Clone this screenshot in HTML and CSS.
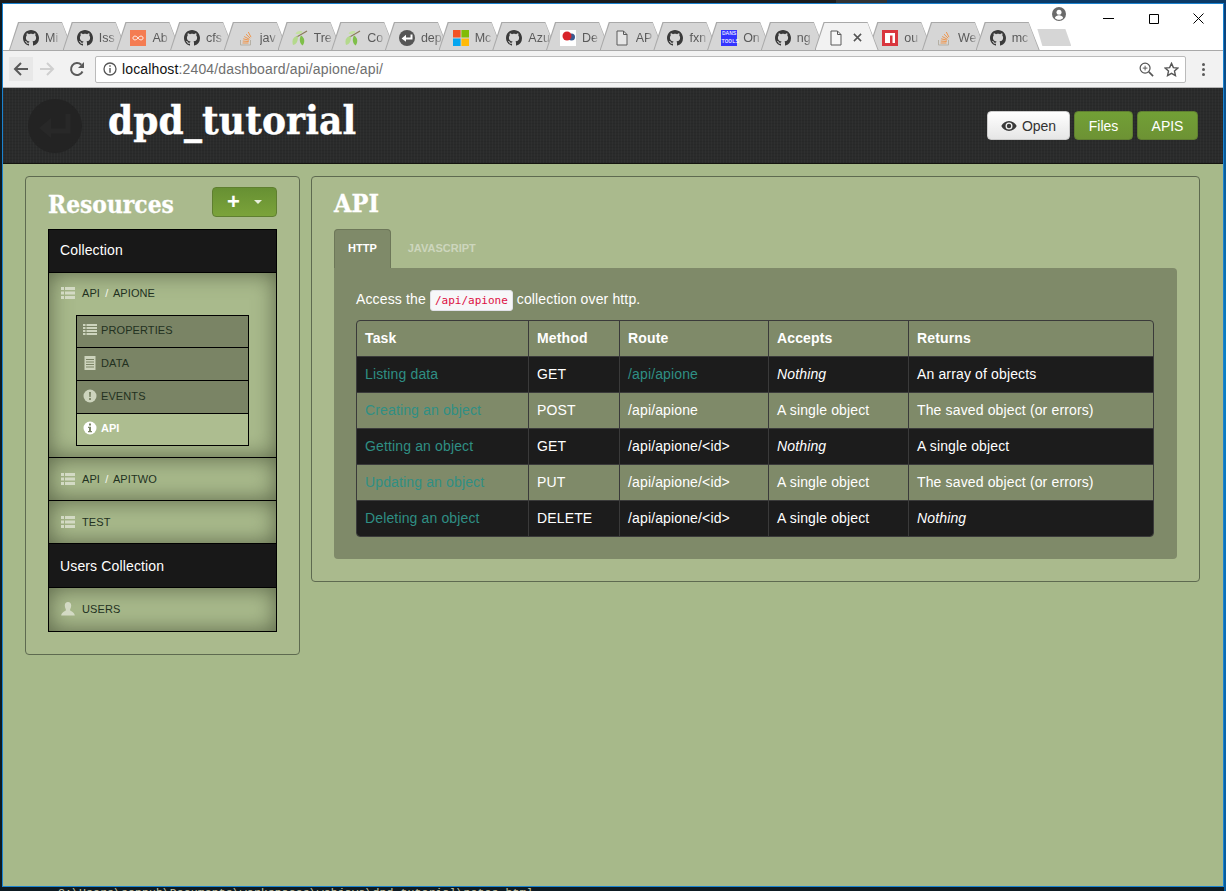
FILE: index.html
```html
<!DOCTYPE html>
<html lang="en">
<head>
  <meta charset="UTF-8" />
  <title>dpd_tutorial</title>
  <link rel="stylesheet" href="styles.css">
</head>
<body>
  <svg class="sprite" xmlns="http://www.w3.org/2000/svg">
    <symbol id="i-gh" viewBox="0 0 16 16"><path fill="#3a3a3a" d="M8 0C3.58 0 0 3.58 0 8c0 3.54 2.29 6.53 5.47 7.59.4.07.55-.17.55-.38 0-.19-.01-.82-.01-1.49-2.01.37-2.53-.49-2.69-.94-.09-.23-.48-.94-.82-1.13-.28-.15-.68-.52-.01-.53.63-.01 1.08.58 1.23.82.72 1.21 1.87.87 2.33.66.07-.52.28-.87.51-1.07-1.78-.2-3.64-.89-3.64-3.95 0-.87.31-1.59.82-2.15-.08-.2-.36-1.02.08-2.12 0 0 .67-.21 2.2.82.64-.18 1.32-.27 2-.27.68 0 1.36.09 2 .27 1.53-1.04 2.2-.82 2.2-.82.44 1.1.16 1.92.08 2.12.51.56.82 1.27.82 2.15 0 3.07-1.87 3.75-3.65 3.95.29.25.54.73.54 1.48 0 1.07-.01 1.93-.01 2.2 0 .21.15.46.55.38A8.013 8.013 0 0016 8c0-4.42-3.58-8-8-8z"/></symbol>
    <symbol id="i-so" viewBox="0 0 16 16"><path fill="none" stroke="#b5b0a5" stroke-width="1" d="M2.500 10v5h10v-5"/><path fill="none" stroke="#f0954a" stroke-width="1" d="M4.500 13h6M4.700 11l6 .5M5.200 8.800l5.800 1.400M6.200 6.500l5.200 2.800M8 4.200l4.200 4M10.300 2l2.700 5.200"/></symbol>
    <symbol id="i-tree" viewBox="0 0 16 16"><path fill="none" stroke="#8a7a5a" stroke-width="1.200" d="M3 8 15 1"/><path fill="#b4d98c" d="M1 15C-.5 10 1 7 5.500 6 6.500 10 5 14 1 15z"/><path fill="#7fbf4a" d="M10.500 15.500C7.500 13 7 9 9 5.500c3.500 2 4.500 6.500 1.500 10z"/><path fill="#c4e2a0" d="M3.500 3.500C5.500 1 8 .5 10.500 1.500 9.500 4 6 5 3.500 3.500z"/></symbol>
    <symbol id="i-dpd" viewBox="0 0 16 16"><circle cx="8" cy="8" r="8" fill="#555"/><path fill="none" stroke="#fff" stroke-width="2" d="M12.500 4.500v4h-8"/><path fill="#fff" d="M7 4.800v7L2.600 8.400z"/></symbol>
    <symbol id="i-ms" viewBox="0 0 16 16"><path fill="#f35325" d="M0 0h7.600v7.600H0z"/><path fill="#81bc06" d="M8.400 0H16v7.600H8.400z"/><path fill="#05a6f0" d="M0 8.400h7.600V16H0z"/><path fill="#ffba08" d="M8.400 8.400H16V16H8.400z"/></symbol>
    <symbol id="i-doc" viewBox="0 0 16 16"><path fill="#fff" fill-opacity=".4" stroke="#5a5a5a" stroke-width="1" d="M3 1h6.500L13 4.500V15H3z"/><path fill="none" stroke="#5a5a5a" stroke-width="1" d="M9.500 1v3.500H13"/></symbol>
    <symbol id="i-list" viewBox="0 0 14 14"><path fill="#d3dac4" d="M0 1h3v3H0zM4 1h10v3H4zM0 5.500h3v3H0zM4 5.500h10v3H4zM0 10h3v3H0zM4 10h10v3H4z"/></symbol>
    <symbol id="i-lines" viewBox="0 0 14 14"><path fill="#cdd4bd" d="M0 1h2.500v2H0zM3.500 1H14v2H3.500zM0 4h2.500v2H0zM3.500 4H14v2H3.500zM0 7h2.500v2H0zM3.500 7H14v2H3.500zM0 10h2.500v2H0zM3.500 10H14v2H3.500z"/></symbol>
  </svg>

  <div class="desktop-top"></div>

  <div class="window">
    <div class="titlebar">
      <div class="tabs">
        <div class="tab"><svg class="fav"><use href="#i-gh"/></svg><span class="tab-name">Mi</span></div>
        <div class="tab"><svg class="fav"><use href="#i-gh"/></svg><span class="tab-name">Iss</span></div>
        <div class="tab">
          <svg class="fav" viewBox="0 0 16 16"><path fill="#f47c52" d="M0 0h16v16H0z"/><path fill="none" stroke="#fff" stroke-width=".9" d="M8 8C6.500 5.500 3 5.500 3 8s3.500 2.500 5 0 5-2.500 5 0-3.500 2.500-5 0z"/></svg>
          <span class="tab-name">Ab</span>
        </div>
        <div class="tab"><svg class="fav"><use href="#i-gh"/></svg><span class="tab-name">cfs</span></div>
        <div class="tab"><svg class="fav"><use href="#i-so"/></svg><span class="tab-name">jav</span></div>
        <div class="tab"><svg class="fav"><use href="#i-tree"/></svg><span class="tab-name">Tre</span></div>
        <div class="tab"><svg class="fav"><use href="#i-tree"/></svg><span class="tab-name">Co</span></div>
        <div class="tab"><svg class="fav"><use href="#i-dpd"/></svg><span class="tab-name">dep</span></div>
        <div class="tab"><svg class="fav"><use href="#i-ms"/></svg><span class="tab-name">Mc</span></div>
        <div class="tab"><svg class="fav"><use href="#i-gh"/></svg><span class="tab-name">Azu</span></div>
        <div class="tab">
          <svg class="fav" viewBox="0 0 16 16"><path fill="#fff" d="M0 0h16v16H0z"/><circle cx="11.500" cy="7" r="3.500" fill="#3b5a90"/><circle cx="7" cy="6" r="4.500" fill="#d8232a"/></svg>
          <span class="tab-name">De</span>
        </div>
        <div class="tab"><svg class="fav"><use href="#i-doc"/></svg><span class="tab-name">AP</span></div>
        <div class="tab"><svg class="fav"><use href="#i-gh"/></svg><span class="tab-name">fxn</span></div>
        <div class="tab"><span class="fav dans">DANS TOOLS</span><span class="tab-name">On</span></div>
        <div class="tab"><svg class="fav"><use href="#i-gh"/></svg><span class="tab-name">ng</span></div>
        <div class="tab tab-active">
          <svg class="fav"><use href="#i-doc"/></svg>
          <svg class="tab-x" viewBox="0 0 10 10"><path fill="none" stroke="#555" stroke-width="1.700" d="M1 1l8 8M9 1l-8 8"/></svg>
        </div>
        <div class="tab">
          <svg class="fav" viewBox="0 0 16 16"><path fill="#d9363e" d="M0 0h16v16H0z"/><path fill="#fff" d="M3 3h10v10h-2.500V5.500H8V13H3z"/></svg>
          <span class="tab-name">ou</span>
        </div>
        <div class="tab"><svg class="fav"><use href="#i-so"/></svg><span class="tab-name">We</span></div>
        <div class="tab"><svg class="fav"><use href="#i-gh"/></svg><span class="tab-name">mc</span></div>
        <div class="new-tab"></div>
      </div>
      <div class="win-area">
        <svg class="profile" viewBox="0 0 14 14"><circle cx="7" cy="7" r="7" fill="#6a6a6a"/><circle cx="7" cy="5.200" r="2.500" fill="#fff"/><path fill="#fff" d="M2.800 11c.6-2 2.400-2.800 4.200-2.800s3.600.8 4.200 2.800c-1 1.200-2.500 1.800-4.200 1.800S3.800 12.200 2.800 11z"/></svg>
        <div class="win-btn"><svg viewBox="0 0 11 11"><path stroke="#000" d="M0 5.500h11"/></svg></div>
        <div class="win-btn"><svg viewBox="0 0 11 11"><path fill="none" stroke="#000" d="M1.500 1.500h9v9h-9z"/></svg></div>
        <div class="win-btn"><svg viewBox="0 0 11 11"><path stroke="#000" d="M.5.500l10 10M10.500.500l-10 10"/></svg></div>
      </div>
    </div>

    <div class="toolbar">
      <div class="nav-btn nav-hover"><svg viewBox="0 0 16 16"><path fill="none" stroke="#5a5a5a" stroke-width="2" d="M15 8H2M8 2L2 8l6 6"/></svg></div>
      <div class="nav-btn nav-fwd"><svg viewBox="0 0 16 16"><path fill="none" stroke="#cfcfcf" stroke-width="2" d="M1 8h13M8 2l6 6-6 6"/></svg></div>
      <div class="nav-btn nav-reload"><svg viewBox="0 0 16 16"><path fill="none" stroke="#5a5a5a" stroke-width="2" d="M13.500 10.500A6 6 0 1 1 12.300 3.800"/><path fill="#5a5a5a" d="M15 1v6H9z"/></svg></div>
      <div class="address">
        <svg class="addr-info" viewBox="0 0 14 14"><circle cx="7" cy="7" r="6" fill="none" stroke="#555" stroke-width="1.300"/><path fill="#555" d="M6.300 3.300h1.400v1.400H6.300zM6.300 6h1.400v4.800H6.300z"/></svg>
        <span class="addr-host">localhost</span><span class="addr-path">:2404/dashboard/api/apione/api/</span>
        <svg class="addr-zoom" viewBox="0 0 16 16"><circle cx="6.500" cy="6.500" r="5.300" fill="none" stroke="#555" stroke-width="1.300"/><path stroke="#555" stroke-width="1.800" d="M10.500 10.500L15 15"/><path stroke="#555" d="M6.500 4v5M4 6.500h5"/></svg>
        <svg class="addr-star" viewBox="0 0 16 16"><path fill="none" stroke="#555" stroke-width="1.500" d="M8 1.500l2 4.500 4.800.5-3.600 3.200 1 4.800L8 12.100l-4.200 2.400 1-4.800L1.200 6.500 6 6z"/></svg>
      </div>
      <div class="chrome-menu"><span></span><span></span><span></span></div>
    </div>

    <header class="app-header">
      <svg class="app-logo" viewBox="0 0 54 54"><circle cx="27" cy="27" r="27" fill="#232323"/><path fill="none" stroke="#282828" stroke-width="5" d="M40 15v17H18"/><path fill="#282828" d="M23 19v20l-12-10z"/></svg>
      <h1 class="app-title">dpd_tutorial</h1>
      <div class="app-actions">
        <a class="btn btn-white"><svg class="eye" viewBox="0 0 16 12"><path fill="#3a3a3a" d="M8 1C4.500 1 1.700 3.200 .3 6c1.400 2.800 4.200 5 7.700 5s6.300-2.200 7.700-5C14.300 3.200 11.500 1 8 1zm0 8.500A3.500 3.500 0 1 1 8 2.500a3.500 3.500 0 0 1 0 7z"/><circle cx="8" cy="6" r="2.200" fill="#3a3a3a"/></svg>Open</a>
        <a class="btn btn-green btn-files">Files</a>
        <a class="btn btn-green btn-apis">APIS</a>
      </div>
    </header>

    <div class="content">
      <aside class="panel sidebar">
        <div class="sidebar-head">
          <h2 class="slab side-title">Resources</h2>
          <a class="btn-add"><span class="plus">+</span><span class="caret"></span></a>
        </div>
        <div class="res-list">
          <div class="res-group">Collection</div>
          <div class="res-item res-open">
            <div class="res-label"><svg class="res-ico"><use href="#i-list"/></svg><span>API <b class="slash">/</b> APIONE</span></div>
            <ul class="sub-list">
              <li class="sub-item"><svg class="sub-ico"><use href="#i-lines"/></svg>Properties</li>
              <li class="sub-item">
                <svg class="sub-ico" viewBox="0 0 14 14"><path fill="#cdd4bd" d="M1.500 0h11v14h-11z"/><path stroke="#7a8465" d="M3 3.500h8M3 6h8M3 8.500h8M3 11h8"/></svg>
                Data
              </li>
              <li class="sub-item">
                <svg class="sub-ico" viewBox="0 0 14 14"><circle cx="7" cy="7" r="6.500" fill="#cdd4bd"/><path fill="#7a8465" d="M6 3h2l-.3 5H6.300zM6.100 9h1.800v2H6.100z"/></svg>
                Events
              </li>
              <li class="sub-item sub-active">
                <svg class="sub-ico" viewBox="0 0 14 14"><circle cx="7" cy="7" r="6.500" fill="#fff"/><path fill="#7a8465" d="M6 2.500h2v2H6zM5 5.800h3V10h1v1.300H5V10h1V7H5z"/></svg>
                API
              </li>
            </ul>
          </div>
          <div class="res-item"><div class="res-label"><svg class="res-ico"><use href="#i-list"/></svg><span>API <b class="slash">/</b> APITWO</span></div></div>
          <div class="res-item"><div class="res-label"><svg class="res-ico"><use href="#i-list"/></svg><span>Test</span></div></div>
          <div class="res-group res-group-users">Users Collection</div>
          <div class="res-item res-last">
            <div class="res-label">
              <svg class="res-ico" viewBox="0 0 14 14"><path fill="#d3dac4" d="M7 0c2 0 3.200 1.400 3.200 3.500S9 7.500 9 8c0 1 4.500 2 4.800 5.500H.2C.5 10 5 9 5 8c0-.5-1.200-2.400-1.200-4.500S5 0 7 0z"/></svg>
              <span>Users</span>
            </div>
          </div>
        </div>
      </aside>

      <main class="panel main-panel">
        <h2 class="slab main-title">API</h2>
        <div class="doc-tabs">
          <a class="doc-tab doc-tab-on">HTTP</a>
          <a class="doc-tab">JavaScript</a>
        </div>
        <div class="doc-pane">
          <p class="doc-intro">Access the <code>/api/apione</code> collection over http.</p>
          <div class="table-wrap">
            <table class="api-table">
              <colgroup>
                <col class="c-task"><col class="c-method"><col class="c-route"><col class="c-accepts"><col>
              </colgroup>
              <thead>
                <tr><th>Task</th><th>Method</th><th>Route</th><th>Accepts</th><th>Returns</th></tr>
              </thead>
              <tbody>
                <tr><td><a>Listing data</a></td><td>GET</td><td><a>/api/apione</a></td><td><em>Nothing</em></td><td>An array of objects</td></tr>
                <tr><td><a>Creating an object</a></td><td>POST</td><td>/api/apione</td><td>A single object</td><td>The saved object (or errors)</td></tr>
                <tr><td><a>Getting an object</a></td><td>GET</td><td>/api/apione/&lt;id&gt;</td><td><em>Nothing</em></td><td>A single object</td></tr>
                <tr><td><a>Updating an object</a></td><td>PUT</td><td>/api/apione/&lt;id&gt;</td><td>A single object</td><td>The saved object (or errors)</td></tr>
                <tr><td><a>Deleting an object</a></td><td>DELETE</td><td>/api/apione/&lt;id&gt;</td><td>A single object</td><td><em>Nothing</em></td></tr>
              </tbody>
            </table>
          </div>
        </div>
      </main>
    </div>
  </div>

  <div class="desktop-bottom">C:\Users\sonpub\Documents\workspaces\webjava\dpd_tutorial\notes.html</div>
</body>
</html>
```

FILE: styles.css
```css
* { box-sizing: border-box; }
html, body {
  margin: 0;
  height: 100%;
  overflow: hidden;
}
body {
  display: flex;
  flex-direction: column;
  font-family: "Liberation Sans", Arial, sans-serif;
  font-size: 14px;
  letter-spacing: .14px;
  color: #fff;
  background: linear-gradient(180deg, #0a3f78 0%, #0a80c4 40%, #0a6fb8 70%, #075c9c 100%) right / 2px 100% no-repeat, #0d1a22;
}
.sprite { display: none; }

.desktop-top {
  height: 3px;
  flex: none;
  background: linear-gradient(90deg, #1c1c1c 836px, #333 836px 887px, #0b3a66 887px);
}
.desktop-bottom {
  height: 4px;
  flex: none;
  overflow: hidden;
  padding-left: 58px;
  font-family: "Liberation Mono", monospace;
  font-size: 11.500px;
  letter-spacing: .09px;
  line-height: 12px;
  color: #c9c7a8;
  white-space: nowrap;
}

.window {
  flex: 1;
  min-height: 0;
  margin: 0 2px;
  border: 1px solid #1a82cf;
  display: flex;
  flex-direction: column;
  background: #a7b98a;
}

/* browser tabs */
.titlebar {
  display: flex;
  height: 46px;
  flex: none;
  background: #fff;
}
.tabs {
  flex: 1;
  min-width: 0;
  display: flex;
  align-items: flex-end;
  padding-left: 6px;
}
.tab {
  position: relative;
  flex: none;
  width: 64px;
  height: 28px;
  margin-right: -10.300px;
  padding: 3px 0 0 14px;
  display: flex;
  align-items: center;
  gap: 6px;
  background: #a9a9a9;
  clip-path: polygon(0 100%, 9px 0, 53px 0, 100% 100%);
}
.tab::before {
  content: "";
  position: absolute;
  inset: 1px 1px 0 1px;
  background: #d6d6d6;
  clip-path: polygon(0 100%, 9px 0, 52px 0, 100% 100%);
}
.tab > * { position: relative; }
.fav {
  width: 16px;
  height: 16px;
  flex: none;
}
.tab-name {
  white-space: nowrap;
  font-size: 12.500px;
  letter-spacing: 0;
  color: #5a5a5a;
  -webkit-mask-image: linear-gradient(90deg, #000 65%, rgba(0,0,0,.25));
  mask-image: linear-gradient(90deg, #000 65%, rgba(0,0,0,.25));
}
.dans {
  background: #3434ff;
  color: #fff;
  font-family: "Liberation Mono", monospace;
  font-size: 6px;
  letter-spacing: 0;
  line-height: 8px;
  text-align: center;
}
.tab-active { z-index: 1; }
.tab-active::before { background: #f2f2f2; }
.tab-active .fav { margin-left: -1px; }
.tab-x {
  width: 9px;
  height: 9px;
  margin-left: 3px;
}
.new-tab {
  flex: none;
  width: 34px;
  height: 17px;
  margin: 0 0 4px 8px;
  background: #d6d6d6;
  clip-path: polygon(0 0, 28px 0, 100% 100%, 5px 100%);
}
.win-area {
  flex: none;
  width: 171px;
  height: 29px;
  display: flex;
}
.profile {
  width: 14px;
  height: 14px;
  margin: 3px 20px 0 0;
  flex: none;
}
.win-btn {
  width: 45px;
  height: 29px;
  display: flex;
  align-items: center;
  justify-content: center;
}
.win-btn svg { width: 11px; height: 11px; }

/* toolbar */
.toolbar {
  height: 38px;
  flex: none;
  display: flex;
  align-items: center;
  padding: 0 0 0 6px;
  background: #f2f2f2;
  border-top: 1px solid #a9a9a9;
  border-bottom: 1px solid #b5b5b5;
}
.nav-btn {
  width: 24px;
  height: 24px;
  display: flex;
  align-items: center;
  justify-content: center;
}
.nav-btn svg { width: 16px; height: 16px; }
.nav-hover { background: #e8e8e8; }
.nav-fwd { margin-left: 2px; }
.nav-reload { margin-left: 6px; }
.address {
  width: 1091px;
  height: 27px;
  margin-left: 6px;
  display: flex;
  align-items: center;
  background: #fff;
  border: 1px solid #bbb;
  border-radius: 2px;
  padding: 0 5px 0 7px;
  font-size: 14px;
}
.addr-info { width: 14px; height: 14px; margin-right: 5px; }
.addr-host { color: #111; }
.addr-path { color: #6f6f6f; }
.addr-zoom { width: 15px; height: 15px; margin-left: auto; margin-right: 10px; }
.addr-star { width: 15px; height: 15px; margin-right: 1px; }
.chrome-menu {
  margin-left: 16px;
  display: flex;
  flex-direction: column;
  gap: 2px;
}
.chrome-menu span {
  width: 3px;
  height: 3px;
  border-radius: 50%;
  background: #5a5a5a;
}

/* app header */
.app-header {
  height: 76px;
  flex: none;
  display: flex;
  align-items: center;
  padding: 0 25px;
  background:
    repeating-linear-gradient(90deg, rgba(255,255,255,.025) 0 1px, transparent 1px 3px),
    repeating-linear-gradient(0deg, rgba(0,0,0,.07) 0 1px, transparent 1px 3px),
    #2a2b2b;
  border-bottom: 1px solid #14150f;
}
.app-logo { width: 54px; height: 54px; flex: none; }
.app-title {
  margin: -13px 0 0 26px;
  font-family: "DejaVu Serif", serif;
  font-stretch: condensed;
  font-size: 40px;
  font-weight: 700;
  letter-spacing: .15px;
  -webkit-text-stroke: .4px #fff;
  color: #fff;
}
.app-actions {
  margin-left: auto;
  display: flex;
  gap: 4px;
}
.btn {
  height: 29px;
  display: flex;
  align-items: center;
  justify-content: center;
  border-radius: 4px;
  font-size: 14px;
  letter-spacing: 0;
}
.btn-white {
  width: 83px;
  color: #333;
  background: linear-gradient(#fff, #e6e6e6);
  border: 1px solid #ccc;
}
.eye { width: 16px; height: 12px; margin-right: 5px; }
.btn-green {
  color: #fff;
  background: linear-gradient(#72a036, #6d9234);
  border: 1px solid #5f7f30;
}
.btn-files { width: 59px; }
.btn-apis { width: 61px; }

/* page */
.content {
  flex: 1;
  min-height: 0;
  display: flex;
  align-items: flex-start;
  gap: 11px;
  padding: 12px 23px 0 22px;
}
.panel {
  background: #aaba8d;
  border: 1px solid #5e6a50;
  border-radius: 4px;
}
.slab {
  margin: 0;
  font-family: "DejaVu Serif", serif;
  font-stretch: condensed;
  font-size: 25px;
  font-weight: 700;
  letter-spacing: 0;
  -webkit-text-stroke: .3px #fff;
  color: #fff;
}

/* resources */
.sidebar {
  width: 275px;
  flex: none;
  padding: 10px 22px 22px;
}
.sidebar-head {
  display: flex;
  justify-content: space-between;
  align-items: center;
  height: 30px;
  margin-bottom: 12px;
}
.side-title {
  font-size: 24.300px;
  line-height: 34px;
  margin-top: 6px;
}
.btn-add {
  width: 65px;
  height: 30px;
  display: flex;
  align-items: center;
  padding-left: 14px;
  border: 1px solid #5f7f30;
  border-radius: 4px;
  background: linear-gradient(#679033, #7ba33a);
}
.plus {
  font-size: 22px;
  font-weight: 700;
  line-height: 24px;
  color: #fff;
}
.caret {
  margin-left: 14px;
  border-left: 4px solid transparent;
  border-right: 4px solid transparent;
  border-top: 4px solid #e8eedc;
}
.res-list { border: 1px solid #000; }
.res-group {
  height: 43px;
  display: flex;
  align-items: center;
  padding: 0 0 2px 11px;
  background: #181818;
  border-bottom: 1px solid #000;
  font-size: 14px;
}
.res-group-users {
  height: 44px;
  padding-bottom: 0;
}
.res-item {
  min-height: 43px;
  background: #a9ba8c;
  border-bottom: 1px solid #000;
  box-shadow: inset 0 0 22px rgba(66, 74, 50, .75);
}
.res-last { border-bottom: 0; }
.res-open {
  height: 185px;
  border-bottom: 1px solid #000;
}
.res-label {
  height: 42px;
  display: flex;
  align-items: center;
  padding: 0 0 1px 12px;
  font-size: 11px;
  letter-spacing: .1px;
  color: #22311f;
  text-transform: uppercase;
}
.res-open .res-label { padding-bottom: 3px; }
.slash { color: #f4f6ee; font-weight: 400; margin: 0 2px; }
.res-ico {
  width: 14px;
  height: 14px;
  margin-right: 7px;
  flex: none;
}
.sub-list {
  list-style: none;
  margin: 0 0 0 27px;
  padding: 0;
  width: 173px;
  border: 1px solid #000;
  border-width: 1px 1px 0;
}
.sub-item {
  height: 33px;
  display: flex;
  align-items: center;
  padding: 0 0 2px 6px;
  background: #7a8465;
  border-bottom: 1px solid #000;
  font-size: 11px;
  letter-spacing: .1px;
  color: #22311f;
  text-transform: uppercase;
}
.sub-item:first-child { height: 32px; padding-bottom: 3px; }
.sub-item:last-child { height: 32px; padding-bottom: 3px; }
.sub-ico {
  width: 14px;
  height: 14px;
  margin-right: 4px;
  flex: none;
}
.sub-active {
  background: #adbd90;
  color: #fff;
  font-weight: 700;
  letter-spacing: 0;
}

/* api docs */
.main-panel {
  flex: 1;
  min-width: 0;
  padding: 10px 22px 22px;
}
.main-title { line-height: 34px; height: 42px; }
.doc-tabs {
  display: flex;
  gap: 3px;
  height: 39px;
}
.doc-tab {
  padding: 0 14px 2px;
  display: flex;
  align-items: center;
  font-size: 11px;
  font-weight: 700;
  letter-spacing: 0;
  color: #cdd6bd;
  text-transform: uppercase;
}
.doc-tab-on {
  padding: 0 13px 2px;
  color: #fff;
  background: #7f8a69;
  border: 1px solid #6d7759;
  border-bottom: 0;
  border-radius: 4px 4px 0 0;
}
.doc-pane {
  background: #7f8a69;
  border-radius: 0 4px 4px 4px;
  padding: 21px 23px 22px 22px;
}
.doc-intro {
  margin: 0 0 10px;
  height: 21px;
  line-height: 20px;
}
code {
  display: inline-block;
  height: 21px;
  padding: 0 4px;
  font-family: "DejaVu Sans Mono", monospace;
  font-size: 11px;
  letter-spacing: 0;
  line-height: 19px;
  color: #dd1144;
  background: #f7f7f9;
  border: 1px solid #e1e1e8;
  border-radius: 3px;
}
.table-wrap {
  border: 1px solid #3a3a3a;
  border-radius: 4px;
  overflow: hidden;
}
.api-table {
  width: 100%;
  table-layout: fixed;
  border-collapse: separate;
  border-spacing: 0;
}
.c-task { width: 171px; }
.c-method { width: 91px; }
.c-route { width: 149px; }
.c-accepts { width: 140px; }
.api-table th, .api-table td {
  height: 36px;
  padding: 0 8px 2px;
  text-align: left;
  border-top: 1px solid #3a3a3a;
  border-left: 1px solid #3a3a3a;
}
.api-table th {
  height: 35px;
  border-top: 0;
}
.api-table th:first-child, .api-table td:first-child { border-left: 0; }
.api-table tbody tr:nth-child(odd) { background: #1c1c1c; }
.api-table a { color: #2f8f84; }
```
